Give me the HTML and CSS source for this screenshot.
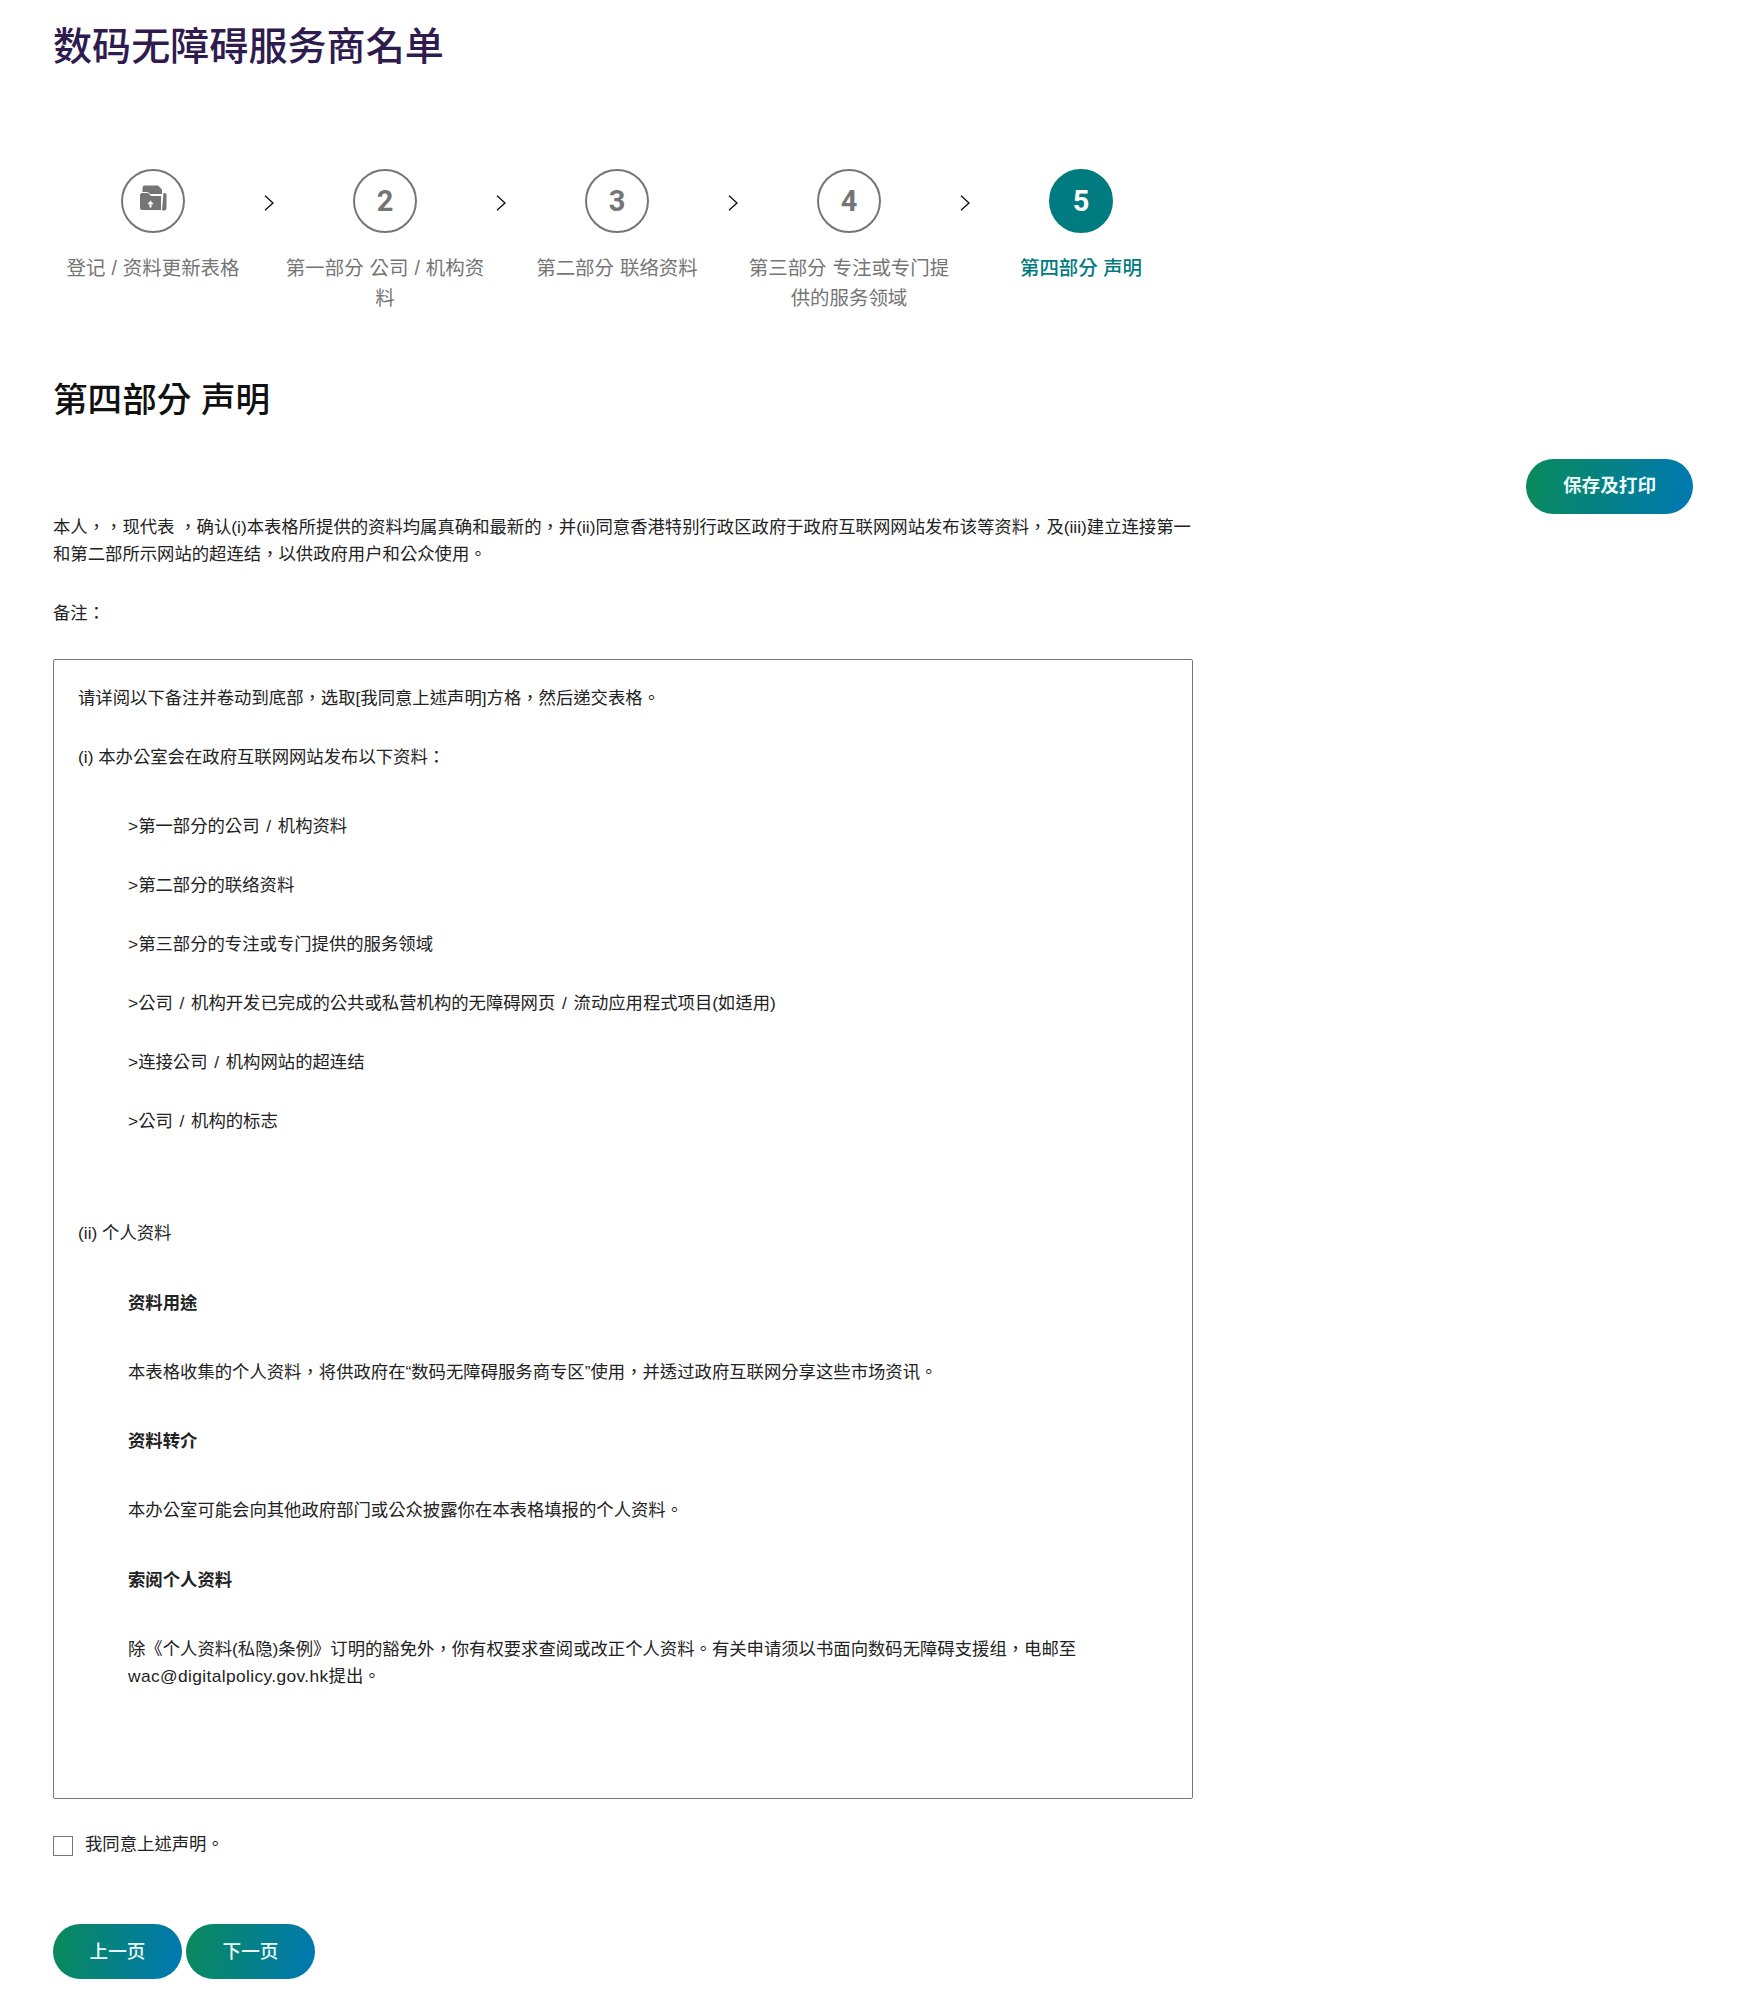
FILE: index.html
```html
<!DOCTYPE html>
<html lang="zh-Hant">
<head>
<meta charset="utf-8">
<title>数码无障碍服务商名单</title>
<link rel="stylesheet" href="styles.css">
</head>
<body>
<main class="page">
  <h1 class="title">数码无障碍服务商名单</h1>

  <ol class="steps">
    <li class="step">
      <span class="circle">
        <svg class="folder" viewBox="0 0 28 26" width="28" height="26" aria-hidden="true">
          <path class="folder-fill" d="M3.500 9V3a2.500 2.500 0 0 1 2.500-2.500h13L23 4.500V9z"/>
          <path class="folder-fill" d="M24.500 8h1a2 2 0 0 1 2 2V23a2.500 2.500 0 0 1-2.500 2.500h-2z"/>
          <path class="folder-front" d="M.5 10a2.500 2.500 0 0 1 2.500-2.500h5c2 0 3 3 5 3h9.500v15H3a2.500 2.500 0 0 1-2.500-2.500z"/>
          <path class="folder-arrow" d="M11.500 15.500l3.200 3.700h-2.200v3.300h-2v-3.300H8.300z"/>
        </svg>
      </span>
      <span class="label">登记 / 资料更新表格</span>
    </li>
    <li class="arrow"><svg viewBox="0 0 10 16" width="10" height="16" aria-hidden="true"><path d="M1 .8 9 8l-8 7.200" fill="none" stroke="#111" stroke-width="1.400"/></svg></li>
    <li class="step"><span class="circle">2</span><span class="label">第一部分 公司 / 机构资料</span></li>
    <li class="arrow"><svg viewBox="0 0 10 16" width="10" height="16" aria-hidden="true"><path d="M1 .8 9 8l-8 7.200" fill="none" stroke="#111" stroke-width="1.400"/></svg></li>
    <li class="step"><span class="circle">3</span><span class="label">第二部分 联络资料</span></li>
    <li class="arrow"><svg viewBox="0 0 10 16" width="10" height="16" aria-hidden="true"><path d="M1 .8 9 8l-8 7.200" fill="none" stroke="#111" stroke-width="1.400"/></svg></li>
    <li class="step"><span class="circle">4</span><span class="label">第三部分 专注或专门提供的服务领域</span></li>
    <li class="arrow"><svg viewBox="0 0 10 16" width="10" height="16" aria-hidden="true"><path d="M1 .8 9 8l-8 7.200" fill="none" stroke="#111" stroke-width="1.400"/></svg></li>
    <li class="step step-active"><span class="circle">5</span><span class="label">第四部分 声明</span></li>
  </ol>

  <h2 class="section-title">第四部分 声明</h2>

  <div class="actions"><button class="btn btn-print" type="button">保存及打印</button></div>

  <p class="intro">本人，，现代表 ，确认(i)本表格所提供的资料均属真确和最新的，并(ii)同意香港特别行政区政府于政府互联网网站发布该等资料，及(iii)建立连接第一和第二部所示网站的超连结，以供政府用户和公众使用。</p>
  <p class="note-label">备注：</p>

  <section class="notes">
    <p class="n-first">请详阅以下备注并卷动到底部，选取[我同意上述声明]方格，然后递交表格。</p>
    <p class="n-sec">(i) 本办公室会在政府互联网网站发布以下资料：</p>
    <div class="indent list">
      <p>&gt;第一部分的公司 / 机构资料</p>
      <p>&gt;第二部分的联络资料</p>
      <p>&gt;第三部分的专注或专门提供的服务领域</p>
      <p>&gt;公司 / 机构开发已完成的公共或私营机构的无障碍网页 / 流动应用程式项目(如适用)</p>
      <p>&gt;连接公司 / 机构网站的超连结</p>
      <p>&gt;公司 / 机构的标志</p>
    </div>
    <p class="n-sec2">(ii) 个人资料</p>
    <div class="indent detail">
      <p><strong>资料用途</strong></p>
      <p>本表格收集的个人资料，将供政府在“数码无障碍服务商专区”使用，并透过政府互联网分享这些市场资讯。</p>
      <p><strong>资料转介</strong></p>
      <p>本办公室可能会向其他政府部门或公众披露你在本表格填报的个人资料。</p>
      <p><strong>索阅个人资料</strong></p>
      <p>除《个人资料(私隐)条例》订明的豁免外，你有权要求查阅或改正个人资料。有关申请须以书面向数码无障碍支援组，电邮至<span class="email">wac@digitalpolicy.gov.hk</span>提出。</p>
    </div>
  </section>

  <label class="agree"><input class="agree-box" type="checkbox"><span>我同意上述声明。</span></label>

  <div class="pager">
    <button class="btn btn-page" type="button">上一页</button>
    <button class="btn btn-page" type="button">下一页</button>
  </div>
</main>
</body>
</html>
```

FILE: styles.css
```css
* { box-sizing: border-box; }

html, body { margin: 0; padding: 0; background: #fff; }

body {
  font-family: "Liberation Sans", "Noto Sans CJK TC", "Noto Sans CJK SC", sans-serif;
  font-size: 17.35px;
  line-height: 27px;
  color: #222;
}

.page {
  padding: 21px 52px 23px 53px;
  height: 2002px;
  overflow: hidden;
}

p { margin: 0; }

.title {
  margin: 0;
  font-size: 39.1px;
  line-height: 52px;
  font-weight: 500;
  color: #2f1c4f;
}

.steps {
  list-style: none;
  display: flex;
  margin: 96px 0 0 -16px;
  padding: 0;
}

.step {
  width: 232px;
  flex: none;
  padding: 0 14px;
  display: flex;
  flex-direction: column;
  align-items: center;
  text-align: center;
}

.arrow {
  width: 0;
  flex: none;
  display: flex;
  justify-content: center;
  margin-top: 26px;
  height: 16px;
}

.arrow svg { flex: none; }

.circle {
  width: 64px;
  height: 64px;
  border: 2px solid #757575;
  border-radius: 50%;
  display: flex;
  align-items: center;
  justify-content: center;
  font-family: Roboto, sans-serif;
  font-size: 29px;
  font-weight: 700;
  color: #757575;
}

.folder { margin-bottom: 6px; }
.folder-fill { fill: #757575; }
.folder-front { fill: #757575; stroke: #fff; stroke-width: 1; }
.folder-arrow { fill: #fff; }

.label {
  margin-top: 20px;
  font-size: 19.45px;
  line-height: 30px;
  word-spacing: .6px;
  color: #757575;
}

.step-active .circle {
  background: #007b7f;
  border-color: #007b7f;
  color: #fff;
}

.step-active .label {
  color: #007b7f;
  font-weight: 500;
  word-spacing: 0;
}

.section-title {
  margin: 65px 0 0;
  font-size: 34.6px;
  line-height: 44px;
  font-weight: 500;
  color: #111;
}

.actions {
  display: flex;
  justify-content: flex-end;
  margin-top: 37px;
}

.btn {
  border: 0;
  height: 55px;
  border-radius: 28px;
  background: linear-gradient(100deg, #0a8a5a 0%, #0078b4 100%);
  color: #eafaf6;
  font-family: inherit;
  font-size: 18.6px;
  font-weight: 700;
  padding: 0 0 6px;
}

.btn-print { width: 167px; }
.btn-page { width: 129px; padding: 0 0 5px; font-weight: 500; }

.intro {
  margin-top: 0;
  width: 1140px;
}

.note-label { margin-top: 32px; }

.notes {
  margin-top: 32px;
  width: 1140px;
  height: 1140px;
  border: 1px solid #777;
  border-radius: 2px;
  padding: 25px 24px 0;
}

.n-sec { margin-top: 32px; }
.indent { margin-left: 50px; }
.list { margin-top: 41.500px; word-spacing: 1.9px; }
.list p + p { margin-top: 32px; }
.n-sec2 { margin-top: 85.500px; }
.detail { margin-top: 42.500px; max-width: 1000px; }
.detail p + p { margin-top: 42.250px; }
.email { letter-spacing: .38px; }
strong { font-weight: 700; }

.agree {
  display: flex;
  align-items: center;
  gap: 12px;
  margin-top: 32px;
}

.agree-box {
  appearance: none;
  width: 20px;
  height: 20px;
  margin: 2px 0 0;
  border: 1px solid #777;
  flex: none;
}

.pager {
  display: flex;
  gap: 4px;
  margin-top: 66px;
}
```
